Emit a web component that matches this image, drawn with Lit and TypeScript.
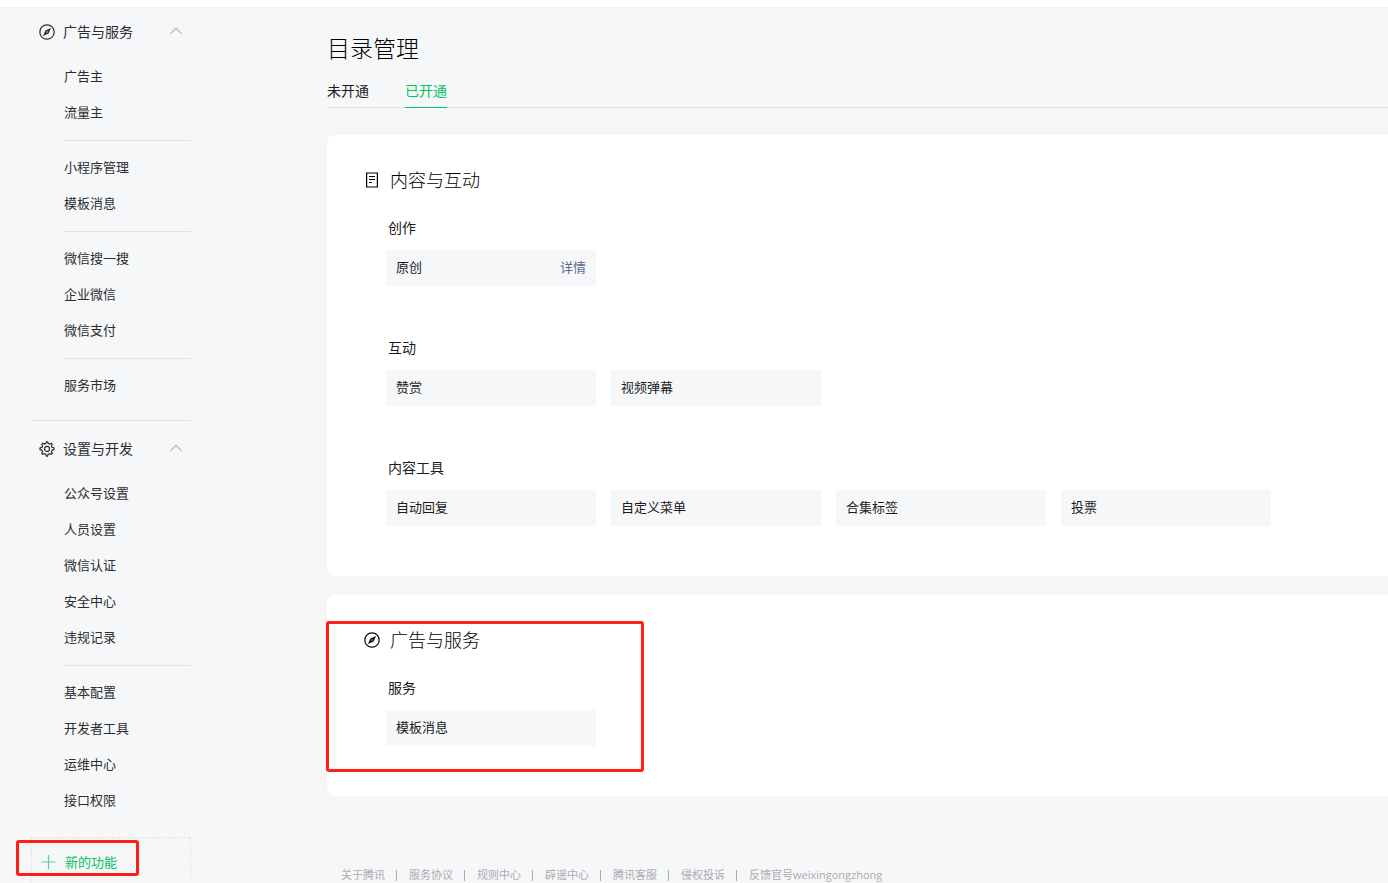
import { LitElement, html, css, svg, nothing } from "lit";
import { customElement, property } from "lit/decorators.js";
import { classMap } from "lit/directives/class-map.js";

type IconName = "compass" | "gear" | "doc" | "chevron" | "plus";

const icons = {
  compass: svg`
    <circle cx="8" cy="8" r="7.2" fill="none" stroke="currentColor" stroke-width="1.2"></circle>
    <path fill="currentColor" fill-rule="evenodd" d="M12 4 9.6 9.6 4 12 6.4 6.4ZM8 7.3a.7.7 0 1 0 0 1.4a.7.7 0 0 0 0-1.4Z"></path>`,
  gear: svg`
    <path fill="none" stroke="currentColor" stroke-width="1.2" stroke-linejoin="round"
      d="M6.9 2.4 7.3.8h1.4l.4 1.6 1.7.7 1.4-.9 1.1 1.1-.9 1.4.7 1.7 1.9.5v1.8l-1.9.5-.7 1.7.9 1.4-1.1 1.1-1.4-.9-1.7.7-.4 1.9H7.3l-.4-1.9-1.7-.7-1.4.9-1.1-1.1.9-1.4-.7-1.7L1 8.7V6.9l1.9-.5.7-1.7-.9-1.4 1.1-1.1 1.4.9Z"></path>
    <circle cx="8" cy="7.9" r="2.5" fill="none" stroke="currentColor" stroke-width="1.2"></circle>`,
  doc: svg`
    <path fill="none" stroke="currentColor" stroke-width="1.2" d="M2.6 1h10.8v14H2.6Z"></path>
    <path fill="none" stroke="currentColor" stroke-width="1.2" d="M5 4.5h6M5 7.5h6M5 10.5h3"></path>`,
  chevron: svg`<path fill="none" stroke="currentColor" stroke-width="1.2" d="M2.4 9.9 8 4.3l5.6 5.6"></path>`,
  plus: svg`<path fill="none" stroke="currentColor" stroke-width="1.2" d="M8.5 1v14M1.5 8h14"></path>`,
};

@customElement("ui-icon")
class UiIcon extends LitElement {
  static styles = css`
    :host { display: block; flex: none; width: 16px; height: 16px; }
    svg { display: block; }
  `;
  @property() name: IconName = "compass";
  render() {
    return html`<svg width="16" height="16" viewBox="0 0 16 16" aria-hidden="true">${icons[this.name]}</svg>`;
  }
}

interface MenuSection { title: string; icon: IconName; groups: string[][]; }
interface Tile { name: string; detail?: boolean; }
interface Panel { title: string; icon: IconName; marked?: boolean; blocks: { title: string; tiles: Tile[] }[]; }

const menu: MenuSection[] = [
  {
    title: "广告与服务",
    icon: "compass",
    groups: [
      ["广告主", "流量主"],
      ["小程序管理", "模板消息"],
      ["微信搜一搜", "企业微信", "微信支付"],
      ["服务市场"],
    ],
  },
  {
    title: "设置与开发",
    icon: "gear",
    groups: [
      ["公众号设置", "人员设置", "微信认证", "安全中心", "违规记录"],
      ["基本配置", "开发者工具", "运维中心", "接口权限"],
    ],
  },
];

const panels: Panel[] = [
  {
    title: "内容与互动",
    icon: "doc",
    blocks: [
      { title: "创作", tiles: [{ name: "原创", detail: true }] },
      { title: "互动", tiles: [{ name: "赞赏" }, { name: "视频弹幕" }] },
      { title: "内容工具", tiles: [{ name: "自动回复" }, { name: "自定义菜单" }, { name: "合集标签" }, { name: "投票" }] },
    ],
  },
  {
    title: "广告与服务",
    icon: "compass",
    marked: true,
    blocks: [{ title: "服务", tiles: [{ name: "模板消息" }] }],
  },
];

const footerLinks = ["关于腾讯", "服务协议", "规则中心", "辟谣中心", "腾讯客服", "侵权投诉", "反馈官号weixingongzhong"];

@customElement("side-menu")
class SideMenu extends LitElement {
  static styles = css`
    :host { display: block; color: #2c2d30; }
    nav { padding: 7px 0 0 31px; }
    a { color: inherit; text-decoration: none; }
    ul { list-style: none; margin: 0; padding: 0; }
    .section + .section { margin-top: 16px; padding-top: 10px; border-top: 1px solid #e0e2e5; }
    .head {
      display: flex; align-items: center; gap: 8px; width: 100%; height: 36px;
      margin: 0 0 9px; padding: 0 7px 0 8px; border: 0; background: none;
      font: inherit; font-size: 14px; color: inherit; text-align: left; cursor: pointer;
    }
    .label { flex: 1; padding-bottom: 2px; }
    .chevron { color: #b2b4b8; }
    .group { margin-left: 33px; }
    .group + .group { margin-top: 9px; padding-top: 9px; border-top: 1px solid #e0e2e5; }
    .item { display: block; padding-bottom: 2px; font-size: 13px; line-height: 34px; }
    .new {
      position: relative; display: flex; align-items: center; gap: 9px; width: 100%; height: 50px;
      margin-top: 18px; padding: 0 8px; border: 1px dashed #e0e2e5; background: none;
      font: inherit; font-size: 13px; color: #07c160; text-align: left; cursor: pointer;
    }
    .plus { color: #5fd096; }
    .mark {
      position: absolute; left: -16px; top: 2px; width: 123px; height: 36px;
      box-sizing: border-box; border: 3px solid #ff2015; border-radius: 3px; pointer-events: none;
    }
  `;
  render() {
    return html`<nav aria-label="功能菜单">
      ${menu.map(
        (s) => html`<section class="section">
          <button class="head" type="button" aria-expanded="true">
            <ui-icon name=${s.icon}></ui-icon><span class="label">${s.title}</span>
            <ui-icon class="chevron" name="chevron"></ui-icon>
          </button>
          ${s.groups.map(
            (g) => html`<ul class="group">${g.map((i) => html`<li><a class="item" href="#">${i}</a></li>`)}</ul>`
          )}
        </section>`
      )}
      <button class="new" type="button">
        <ui-icon class="plus" name="plus"></ui-icon><span class="label">新的功能</span><span class="mark"></span>
      </button>
    </nav>`;
  }
}

@customElement("feature-panel")
class FeaturePanel extends LitElement {
  static styles = css`
    :host { display: block; }
    .panel {
      position: relative; padding: 32px 0 50px 37px; background: #fff;
      border-radius: 8px 0 0 8px; box-shadow: 0 1px 10px rgba(0, 0, 0, 0.02);
    }
    .title { display: flex; align-items: center; gap: 10px; margin: 0 0 24px; font-size: 18px; font-weight: 300; line-height: 24px; color: #000; }
    .label { padding-bottom: 2px; }
    .block { padding-left: 22px; }
    .block + .block { margin-top: 51px; }
    .name { margin: 0 0 13px; padding-left: 2px; font-size: 14px; font-weight: inherit; line-height: 20px; }
    .tiles { display: flex; flex-wrap: wrap; gap: 15px; margin: 0; padding: 0; list-style: none; }
    .tile {
      display: flex; justify-content: space-between; box-sizing: border-box; width: 210px;
      padding: 0 10px 2px; background: #f6f7f9; font-size: 13px; line-height: 34px;
    }
    .detail { color: #576b95; text-decoration: none; }
    .mark {
      position: absolute; left: -1px; top: 26px; width: 318px; height: 151px;
      box-sizing: border-box; border: 3px solid #ff2015; border-radius: 3px; pointer-events: none;
    }
  `;
  @property({ attribute: false }) data!: Panel;
  render() {
    const { title, icon, blocks, marked } = this.data;
    return html`<section class="panel">
      <h2 class="title"><ui-icon name=${icon}></ui-icon><span class="label">${title}</span></h2>
      ${blocks.map(
        (b) => html`<div class="block">
          <h3 class="name">${b.title}</h3>
          <ul class="tiles">
            ${b.tiles.map(
              (t) => html`<li class="tile"><span>${t.name}</span>${t.detail ? html`<a class="detail" href="#">详情</a>` : nothing}</li>`
            )}
          </ul>
        </div>`
      )}
      ${marked ? html`<span class="mark"></span>` : nothing}
    </section>`;
  }
}

@customElement("app-root")
class AppRoot extends LitElement {
  static styles = css`
    :host {
      display: flex; flex-direction: column; height: 100vh; overflow: hidden; background: #fff; color: #1a1b1c;
      font-family: "Noto Sans CJK SC", sans-serif;
    }
    .topbar { flex: none; height: 7px; }
    .page {
      flex: 1; display: grid; grid-template-columns: 191px minmax(0, 1fr); column-gap: 136px; align-items: start;
      background: #f6f7f9; box-shadow: inset 0 2px 3px rgba(0, 0, 0, 0.02);
    }
    .main { padding-top: 26px; }
    .heading { margin: 0 0 16px; font-size: 23px; font-weight: 300; line-height: 28px; color: #000; }
    .tabs { display: flex; gap: 36px; margin-bottom: 27px; border-bottom: 1px solid #e0e2e5; }
    .tab { margin-bottom: -1px; padding-bottom: 4px; border-bottom: 1px solid transparent; font-size: 14px; line-height: 26px; color: inherit; text-decoration: none; }
    .active { color: #07c160; border-bottom-color: #07c160; }
    .panels { display: grid; gap: 19px; }
    .footer {
      display: flex; flex-wrap: wrap; gap: 11px; margin-top: 71px; padding-left: 14px;
      font-family: "Open Sans", "Noto Sans CJK SC", sans-serif; font-size: 11px; line-height: 16px;
    }
    .link { color: #aaacb0; text-decoration: none; }
    .link + .link { display: flex; align-items: center; gap: 12px; }
    .link + .link::before { content: ""; width: 1px; height: 11px; background: #aaacb0; }
  `;
  render() {
    return html`
      <div class="topbar"></div>
      <div class="page">
        <side-menu></side-menu>
        <main class="main">
          <h1 class="heading">目录管理</h1>
          <nav class="tabs" aria-label="目录">
            ${["未开通", "已开通"].map(
              (t, i) => html`<a class=${classMap({ tab: true, active: i === 1 })} href="#">${t}</a>`
            )}
          </nav>
          <div class="panels">${panels.map((p) => html`<feature-panel .data=${p}></feature-panel>`)}</div>
          <footer class="footer">${footerLinks.map((l) => html`<a class="link" href="#">${l}</a>`)}</footer>
        </main>
      </div>
    `;
  }
}
